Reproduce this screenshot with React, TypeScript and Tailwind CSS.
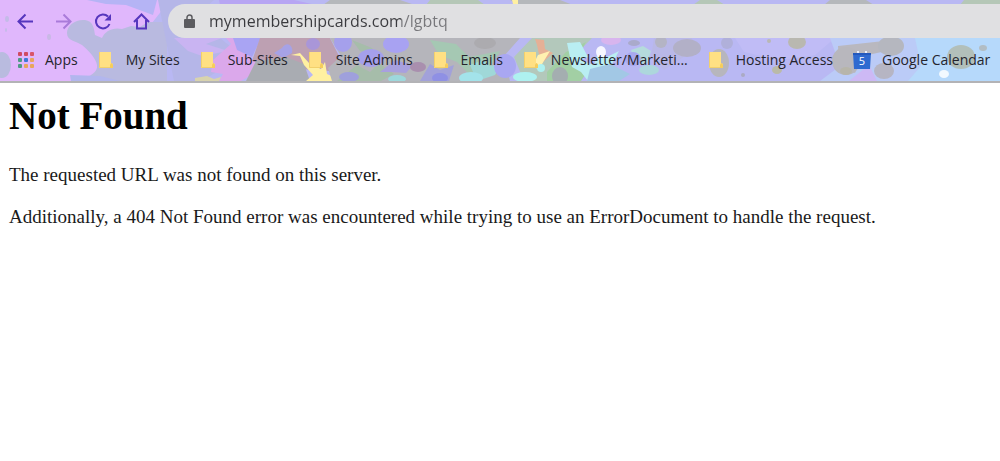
const bookmarks = [
  { label: "Apps", icon: "apps" },
  { label: "My Sites", icon: "folder" },
  { label: "Sub-Sites", icon: "folder" },
  { label: "Site Admins", icon: "folder" },
  { label: "Emails", icon: "folder" },
  { label: "Newsletter/Marketi...", icon: "folder" },
  { label: "Hosting Access", icon: "folder" },
  { label: "Google Calendar", icon: "calendar" },
];

const appColors = [
  "#cf4a62", "#cf4a62", "#d9556a",
  "#4f9a86", "#3f78d8", "#e8a55c",
  "#4f9a86", "#e8a55c", "#e8a55c",
];

// Round paint drops: x, y, rx, ry, fill
const drops: [number, number, number, number, string][] = [
  [2, 65, 9, 13, "#b9bbdf"],
  [7, 19, 2, 3, "#c4bbe8"],
  [6, 30, 1, 2, "#c4bbe8"],
  [49, 37, 2, 3, "#c9b9e6"],
  [343, 42, 9, 10, "#a5a0ec"],
  [371, 58, 13, 9, "#a5a0ec"],
  [396, 44, 13, 9, "#a8a2f2"],
  [313, 44, 7, 6, "#a996d8"],
  [349, 77, 10, 5, "#9fa0dc"],
  [418, 67, 8, 5, "#a98fae"],
  [440, 78, 8, 5, "#8f90e4"],
  [397, 79, 9, 4, "#9dd8dc"],
  [471, 78, 12, 6, "#a3e3ea"],
  [485, 43, 11, 6, "#acabaf"],
  [505, 66, 11, 12, "#a9a7f2"],
  [525, 77, 12, 5, "#aef1f0"],
  [541, 68, 4, 4, "#aef1f0"],
  [560, 76, 8, 9, "#a4aeb0"],
  [601, 52, 5, 6, "#f6f6ff"],
  [611, 40, 10, 5, "#d8b5ee"],
  [634, 43, 6, 3, "#aaaacb"],
  [633, 59, 8, 7, "#a9a8ee"],
  [649, 70, 10, 5, "#add7dc"],
  [661, 42, 6, 6, "#b4b4c4"],
  [687, 48, 14, 9, "#b2b0c7"],
  [719, 63, 10, 14, "#b7b6bd"],
  [727, 43, 6, 6, "#b0b0da"],
  [743, 75, 2, 2, "#abaac3"],
  [769, 41, 2, 2, "#b9b8b4"],
  [797, 42, 9, 7, "#b9b8b0"],
  [777, 70, 5, 4, "#babaa8"],
  [846, 61, 14, 14, "#b8b7bd"],
  [846, 71, 6, 4, "#b7b5aa"],
  [891, 46, 13, 10, "#b5b7bf"],
  [884, 71, 10, 8, "#b6b5c3"],
  [961, 57, 14, 12, "#b2bfba"],
  [983, 48, 4, 3, "#b2bdc4"],
  [944, 74, 5, 4, "#f2f9ff"],
];

function PaintBackdrop() {
  return (
    <svg
      className="absolute inset-0 h-full w-full"
      viewBox="0 0 1000 81"
      preserveAspectRatio="xMidYMid slice"
      aria-hidden="true"
    >
      <rect width="1000" height="81" fill="#b9b8f3" />
      <path d="M0 0H170L152 23 166 81H0z" fill="#e0b7fc" />
      <path d="M87 0h70l-4 15-27-10-20-1z" fill="#b5b4f5" />
      <path d="M67 33c0-8 9-14 18-13 8 1 9 8 10 15l7 3c3-7 11-11 20-9l9-3 9 1 8-5h19v59H81c9-6 17-8 16-16-1-7-9-15-15-20-6-4-15-4-15-12z" fill="#b9bae0" />
      <path d="M70 75l30 1 20 5H71z" fill="#b2b6ee" />
      <path d="M158 0h56l-6 5 12 33 22 18-40 25h-28z" fill="#b5b6e8" />
      <path d="M174 38h48l-16 6 22 7-26 5-14-5z" fill="#c9b4f2" />
      <path d="M213 60l18-16-5-6h34l-9 19 10 12-20 12h-22l4-7-12-2z" fill="#dba8eb" />
      <path d="M233 38h28l-9 19-15-7z" fill="#a9a4f3" />
      <path d="M214 79l-7-3-12 2v3h24l2-4z" fill="#d8d3ae" />
      <path d="M260 38h70l10 20-11 13-43-3-34-7z" fill="#bda0b2" />
      <path d="M282 48c5-8 12-2 10 5l-9 5-9-5z" fill="#a6a2e6" />
      <path d="M246 81l10-20 30-4 18 7 6 17z" fill="#a9acb2" />
      <path d="M291 55l9-2 9 10 12 6 4-7 2 12 9 4-3 3h-27l7-6-9-10-4-9z" fill="#fff0a1" />
      <path d="M330 38h190l-16 18 6 25H332l-4-13 13-12z" fill="#b5b5bb" />
      <path d="M337 81l20-16 13 7 9-9 15 11-13 7zM352 40l20 8 5 8-17-5z" fill="#a6bdaa" />
      <path d="M430 40l26 4 13 13 31-6-11 18-21 4-11-11-18-7z" fill="#a5c8b3" />
      <path d="M430 64l10 6 14-5-5 16h-29z" fill="#a2a1da" />
      <path d="M470 65l13-5 7 6 12-3-7 12-18 6z" fill="#9fd8d8" />
      <path d="M380 72l15-12 18 5-7 8-14-1z" fill="#a8a0df" />
      <path d="M514 57l18-19h60l-12 12-8 31h-48z" fill="#b3c8bb" />
      <path d="M537 45l-2-6 9 1 1 9 8 4-12 11z" fill="#e5b096" />
      <path d="M538 55l12-4-11 18-7-2z" fill="#fff0b0" />
      <path d="M547 72l19-20 20-10-8 15 11 12-8 12h-34z" fill="#a2cfa4" />
      <path d="M567 43l13-1 8 15-8 3 14 5 4-13 9 5 12-6-8 15 14 6-11 4-26 5-7-9-9-5z" fill="#b9eef2" />
      <path d="M631 50l12-4 8 5-4 13-12-1z" fill="#b5dbdc" />
      <path d="M590 69l20-5 20 10-11 7h-32z" fill="#a2c8e5" />
      <path d="M654 38h38l-7 18-21 14-13-13z" fill="#b9b8e7" />
      <path d="M735 38h100l-20 17-35 5-36-8z" fill="#c0bcf6" />
      <path d="M830 38h170v43H820l20-15z" fill="#bbcbf7" />
      <path d="M915 38h85v43h-92l13-15z" fill="#b6d9fb" />
      <path d="M838 46l46-5 7 9-28 6-8 17-16-9z" fill="#b9b8bf" />
      <path d="M859 73l10-8 8 16h-28z" fill="#cdb9f5" />
      <path d="M219 0h75l22 5h-96z" fill="#b7a5f3" />
      <path d="M330 0h70l15 5h-92zM510 0h50l13 5h-54zM830 0h36l8 5h-50z" fill="#b5b8bb" />
      <path d="M430 0h48l7 5h-59zM700 0h17l8 5h-32zM964 0h36v5h-40z" fill="#b5c7b7" />
      <path d="M512 0h6v4h-5z" fill="#fff0a1" />
      {drops.map(([cx, cy, rx, ry, fill], i) => (
        <ellipse key={i} cx={cx} cy={cy} rx={rx} ry={ry} fill={fill} />
      ))}
    </svg>
  );
}

function AppsIcon() {
  return (
    <svg width="17" height="17" viewBox="0 0 17 17" className="shrink-0">
      {appColors.map((color, i) => (
        <rect key={i} x={1 + (i % 3) * 6} y={Math.floor(i / 3) * 6} width="4" height="4" rx="1" fill={color} />
      ))}
    </svg>
  );
}

function FolderIcon() {
  return (
    <svg width="17" height="18" viewBox="0 0 17 18" className="shrink-0">
      <path d="M1 1h12v11l2 1v4H1z" fill="#ffe083" />
      <path d="M12 17v-3.500l1.500-1.500 1.500 1.500V17z" fill="#f5cd5c" />
      <path d="M1.500 1v15.500H12" fill="none" stroke="#f2d06c" />
    </svg>
  );
}

function CalendarIcon() {
  return (
    <svg width="18" height="18" viewBox="0 0 18 18" className="shrink-0">
      <path d="M4 0h2v2H4zM12 0h2v2h-2z" fill="#eef1fb" />
      <path d="M0 2h18l-1 16H1z" fill="#2f6ad0" />
      <path d="M0 2h18v2H0z" fill="#2459bd" />
      <text x="9" y="14" textAnchor="middle" fontSize="11" fontFamily="Open Sans, sans-serif" fill="#fff">
        5
      </text>
    </svg>
  );
}

function BookmarkIcon({ icon }: { icon: string }) {
  if (icon === "apps") return <AppsIcon />;
  if (icon === "calendar") return <CalendarIcon />;
  return <FolderIcon />;
}

export default function App() {
  return (
    <div className="min-h-screen bg-white">
      <header className="relative border-b-2 border-[#b3b3b6]">
        <PaintBackdrop />

        {/* Toolbar */}
        <div className="relative flex items-center h-[41px] pl-4">
          <div className="flex gap-[19px] text-[#5636bd]">
            <button aria-label="Back">
              <svg width="20" height="20" viewBox="0 0 20 20" fill="none" stroke="currentColor" strokeWidth="2">
                <path d="M17 10.500H3M9.500 3.500l-7 7 7 7" />
              </svg>
            </button>
            <button aria-label="Forward" className="text-[#a97bd9]">
              <svg width="20" height="20" viewBox="0 0 20 20" fill="none" stroke="currentColor" strokeWidth="2">
                <path d="M1 10.500h14M8.500 3.500l7 7-7 7" />
              </svg>
            </button>
            <button aria-label="Reload">
              <svg width="20" height="20" viewBox="0 0 20 20" fill="none" stroke="currentColor" strokeWidth="2">
                <path d="M15.500 13a7 7 0 1 1-1.500-7.500" />
                <path d="M17 3v6.500h-6.500z" fill="currentColor" stroke="none" />
              </svg>
            </button>
            <button aria-label="Home">
              <svg width="20" height="20" viewBox="0 0 20 20" fill="none" stroke="currentColor" strokeWidth="2">
                <path d="M1 11l7.500-7.500L16 11M4 9v8.500h9V9" />
              </svg>
            </button>
          </div>
          <div className="ml-[15px] flex-1 h-[34px] bg-[#e0e0e2] rounded-l-full flex items-center gap-3.5 pl-4">
            <svg width="11" height="14" viewBox="0 0 11 14" className="shrink-0">
              <path d="M3 6V3.500a2.500 2.500 0 0 1 5 0V6" fill="none" stroke="#5c5c60" strokeWidth="1.500" />
              <rect y="5" width="11" height="9" rx="1" fill="#5c5c60" />
            </svg>
            <input
              aria-label="Address"
              className="flex-1 min-w-0 text-base font-['Open_Sans',sans-serif] text-transparent bg-clip-text bg-[linear-gradient(to_right,#3a3a3e_192px,#77777b_192px)]"
              defaultValue="mymembershipcards.com/lgbtq"
            />
          </div>
        </div>

        {/* Bookmarks bar */}
        <nav className="relative flex h-10 items-center gap-5 pl-[17px] pb-0.5 overflow-hidden text-sm text-[#25252d] font-['Open_Sans',sans-serif]">
          {bookmarks.map((bookmark) => (
            <a key={bookmark.label} href="#" className="flex items-center gap-[11px] whitespace-nowrap">
              <BookmarkIcon icon={bookmark.icon} />
              {bookmark.label}
            </a>
          ))}
        </nav>
      </header>

      <main className="px-[9px] pt-[11px] font-['Liberation_Serif',serif] text-black">
        <h1 className="text-[39px] font-bold leading-[44px]">Not Found</h1>
        <div className="mt-[26px] flex flex-col gap-5 text-[19px] leading-[22px] text-[#1a1a1a]">
          <p>The requested URL was not found on this server.</p>
          <p>
            Additionally, a 404 Not Found error was encountered while trying to use an ErrorDocument to
            handle the request.
          </p>
        </div>
      </main>
    </div>
  );
}
